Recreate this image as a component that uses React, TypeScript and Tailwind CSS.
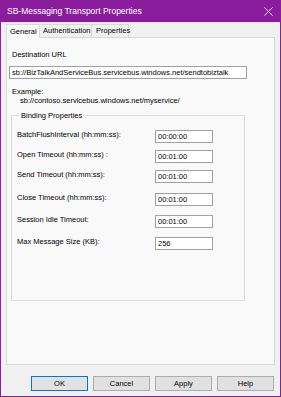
import React from 'react'

const FONT = { fontFamily: '"Liberation Sans", Arial, sans-serif' }

const ROWS: { label: string; value: string; gap: string }[] = [
  { label: 'BatchFlushInterval (hh:mm:ss):', value: '00:00:00', gap: 'mt-[10px]' },
  { label: 'Open Timeout (hh:mm:ss) :', value: '00:01:00', gap: 'mt-[7px]' },
  { label: 'Send Timeout (hh:mm:ss):', value: '00:01:00', gap: 'mt-[7px]' },
  { label: 'Close Timeout (hh:mm:ss):', value: '00:01:00', gap: 'mt-[10px]' },
  { label: 'Session Idle Timeout:', value: '00:01:00', gap: 'mt-[9px]' },
  { label: 'Max Message Size (KB):', value: '256', gap: 'mt-[9px]' },
]

const TABS = ['General', 'Authentication', 'Properties']

function Field({ value, className }: { value: string; className: string }) {
  return (
    <div
      className={`h-[13px] bg-white border border-[#a0a0a0] pl-[2px] text-[7.5px] leading-[11px] text-black whitespace-nowrap overflow-hidden ${className}`}
    >
      {value}
    </div>
  )
}

export default function App() {
  return (
    <div
      className="w-[281px] h-[397px] bg-[#8a1d9c] flex flex-col px-[1px] pb-[1px]"
      style={FONT}
    >
      {/* Title bar */}
      <div className="h-[22px] flex items-center justify-between pl-[6px] pr-[7px] text-white">
        <span className="text-[8.5px]">SB-Messaging Transport Properties</span>
        <svg width="9" height="9" viewBox="0 0 9 9" className="mt-[1px]">
          <path d="M0.5 0.5l8 8M8.5 0.5l-8 8" stroke="white" strokeWidth="1" />
        </svg>
      </div>

      <div className="flex-1 bg-[#f0f0f0] flex flex-col">
        {/* Tabs */}
        <div className="flex items-end ml-[5px] mt-[1px] h-[14px]">
          {TABS.map((t, i) => (
            <div
              key={t}
              className={`border border-[#d9d9d9] border-b-0 text-[7.5px] text-black flex items-center ${
                i === 0
                  ? 'h-[14px] w-[34px] pl-[3px] bg-[#f9f9f9] relative z-10 -mb-[1px]'
                  : i === 1
                  ? 'h-[13px] w-[53px] pl-[3px] -ml-[1px]'
                  : 'h-[13px] w-[38px] pl-[4px] -ml-[1px]'
              }`}
            >
              {t}
            </div>
          ))}
        </div>

        {/* Tab panel */}
        <div className="mx-[5px] h-[328px] border border-[#d9d9d9] bg-[#f9f9f9] text-[7.5px] text-black flex flex-col">
          <div className="ml-[5px] mt-[12px] leading-[10px]">Destination URL</div>
          <Field
            value="sb://BizTalkAndServiceBus.servicebus.windows.net/sendtobiztalk"
            className="ml-[2px] mt-[6px] w-[238px]"
          />
          <div className="ml-[5px] mt-[8px] leading-[9px]">Example:</div>
          <div className="ml-[13px] leading-[9px]">sb://contoso.servicebus.windows.net/myservice/</div>

          <fieldset className="ml-[4px] mt-[6px] w-[234px] h-[190px] border border-[#dcdcdc] px-[5px]">
            <legend className="ml-[3px] px-[1px] leading-[9px]">Binding Properties</legend>
            {ROWS.map((r) => (
              <div key={r.label} className={`flex items-center ${r.gap}`}>
                <span className="w-[138px] leading-[10px] -mt-[3px]">{r.label}</span>
                <Field value={r.value} className="w-[58px]" />
              </div>
            ))}
          </fieldset>
        </div>

        {/* Buttons */}
        <div className="flex justify-end gap-[5px] mt-[11px] pr-[6px]">
          {['OK', 'Cancel', 'Apply', 'Help'].map((b) => (
            <button
              key={b}
              className={`w-[57px] h-[15px] text-[7.5px] text-black bg-[#e1e1e1] border ${
                b === 'OK' ? 'border-[#0078d7]' : 'border-[#adadad]'
              }`}
            >
              {b}
            </button>
          ))}
        </div>
      </div>
    </div>
  )
}
